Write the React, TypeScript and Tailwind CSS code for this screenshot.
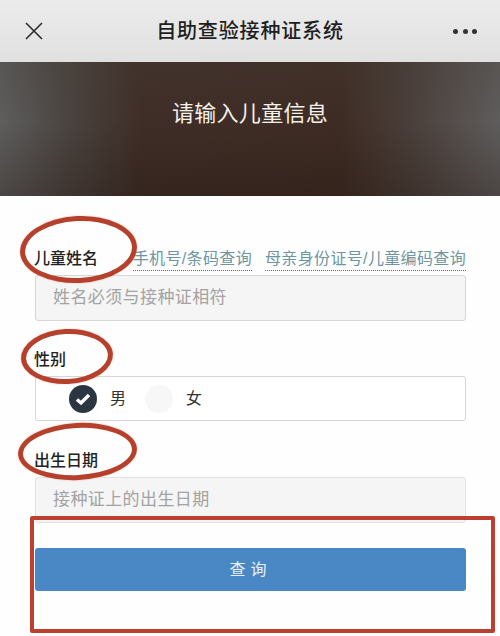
import React from 'react';

const font = "font-['Liberation_Sans','Noto_Sans_CJK_SC',sans-serif]";

function Label({ text, children }: { text: string; children?: React.ReactNode }) {
  return (
    <div className="flex items-center justify-between h-[24px] mb-[5px] pt-[2px]">
      <span className="-ml-[1px] text-[16px] leading-[24px] font-medium text-[#222]">{text}</span>
      {children}
    </div>
  );
}

function Ring({ className }: { className: string }) {
  return (
    <div
      className={`absolute rounded-[50%] border-[5px] border-[#b5412d] rotate-[-3deg] shadow-[0_0_2px_#f0b9a8] ${className}`}
    />
  );
}

export default function App() {
  return (
    <div className={`relative w-[500px] h-[636px] overflow-hidden bg-[#fefefe] ${font}`}>
      {/* Top bar */}
      <div className="flex items-center justify-between h-[62px] pl-[25px] pr-[23px] bg-gradient-to-b from-[#ececec] to-[#e0e0e0]">
        <svg width="18" height="18" viewBox="0 0 18 18" fill="none" stroke="#2b2b2b" strokeWidth="1.6">
          <path d="M1 1 17 17M17 1 1 17" />
        </svg>
        <span className="ml-[4px] text-[20px] leading-[28px] font-medium tracking-[0.85px] text-[#1f1f1f]">自助查验接种证系统</span>
        <div className="flex gap-[4.5px]">
          <span className="w-[5px] h-[5px] rounded-full bg-[#333]" />
          <span className="w-[5px] h-[5px] rounded-full bg-[#333]" />
          <span className="w-[5px] h-[5px] rounded-full bg-[#333]" />
        </div>
      </div>

      {/* Banner */}
      <div className="flex justify-center items-start pt-[36px] h-[134px] bg-[linear-gradient(180deg,rgba(70,62,55,0.25)_0%,rgba(50,35,28,0)_45%,rgba(30,16,10,0.3)_100%),linear-gradient(90deg,#5e5e5e_0%,#4a433f_14%,#3f2e27_28%,#3e2c24_68%,#4a3f3a_82%,#5f5d5d_100%)]">
        <span className="text-[22px] leading-[32px] tracking-[0.3px] text-[#f4f1ec]">请输入儿童信息</span>
      </div>

      {/* Form */}
      <div className="pt-[50px] pl-[35px] pr-[34px]">
        <Label text="儿童姓名">
          <div className="flex gap-[13px] text-[16px] leading-[22px] tracking-[0.35px] text-[#6d96a3]">
            <span className="border-b border-dotted border-[#52707a]">手机号/条码查询</span>
            <span className="border-b border-dotted border-[#52707a]">母亲身份证号/儿童编码查询</span>
          </div>
        </Label>
        <div className="flex items-center h-[46px] pl-[17px] bg-[#f5f5f5] border border-[#d6d6d6] rounded-[3px] text-[17px] tracking-[0.4px] text-[#a3a3a3]">
          姓名必须与接种证相符
        </div>

        <div className="mt-[26px]">
          <Label text="性别" />
        </div>
        <div className="flex items-center h-[45px] pl-[33px] bg-white border border-[#d6d6d6] rounded-[3px] text-[16px] text-[#333]">
          <span className="flex items-center justify-center w-[28px] h-[28px] rounded-full bg-[#2c3640]">
            <svg width="16" height="14" viewBox="0 0 16 14" fill="none" stroke="#fff" strokeWidth="3.4">
              <path d="M2 7.5 6 11 14 3" />
            </svg>
          </span>
          <span className="ml-[13px]">男</span>
          <span className="ml-[19px] w-[28px] h-[28px] rounded-full bg-[#f7f7f7]" />
          <span className="ml-[13px]">女</span>
        </div>

        <div className="mt-[27px]">
          <Label text="出生日期" />
        </div>
        <div className="flex items-center h-[46px] pl-[17px] bg-[#f5f5f5] border border-[#e2e2e2] rounded-[3px] text-[17px] tracking-[0.4px] text-[#a3a3a3]">
          接种证上的出生日期
        </div>

        <button className="flex items-center justify-center w-full h-[43px] mt-[25px] rounded-[3px] bg-[#4a87c5] text-[16px] tracking-[5px] text-[#e8f1f8]">
          查询
        </button>
      </div>

      {/* Red annotations drawn over the form */}
      <Ring className="left-[20px] top-[216px] w-[117px] h-[67px]" />
      <Ring className="left-[21px] top-[329px] w-[92px] h-[55px]" />
      <Ring className="left-[18px] top-[423px] w-[119px] h-[57px]" />
      <div className="absolute left-[30px] top-[516px] w-[465px] h-[117px] border-[4px] border-[#bd3f2f] rounded-[2px]" />
    </div>
  );
}
